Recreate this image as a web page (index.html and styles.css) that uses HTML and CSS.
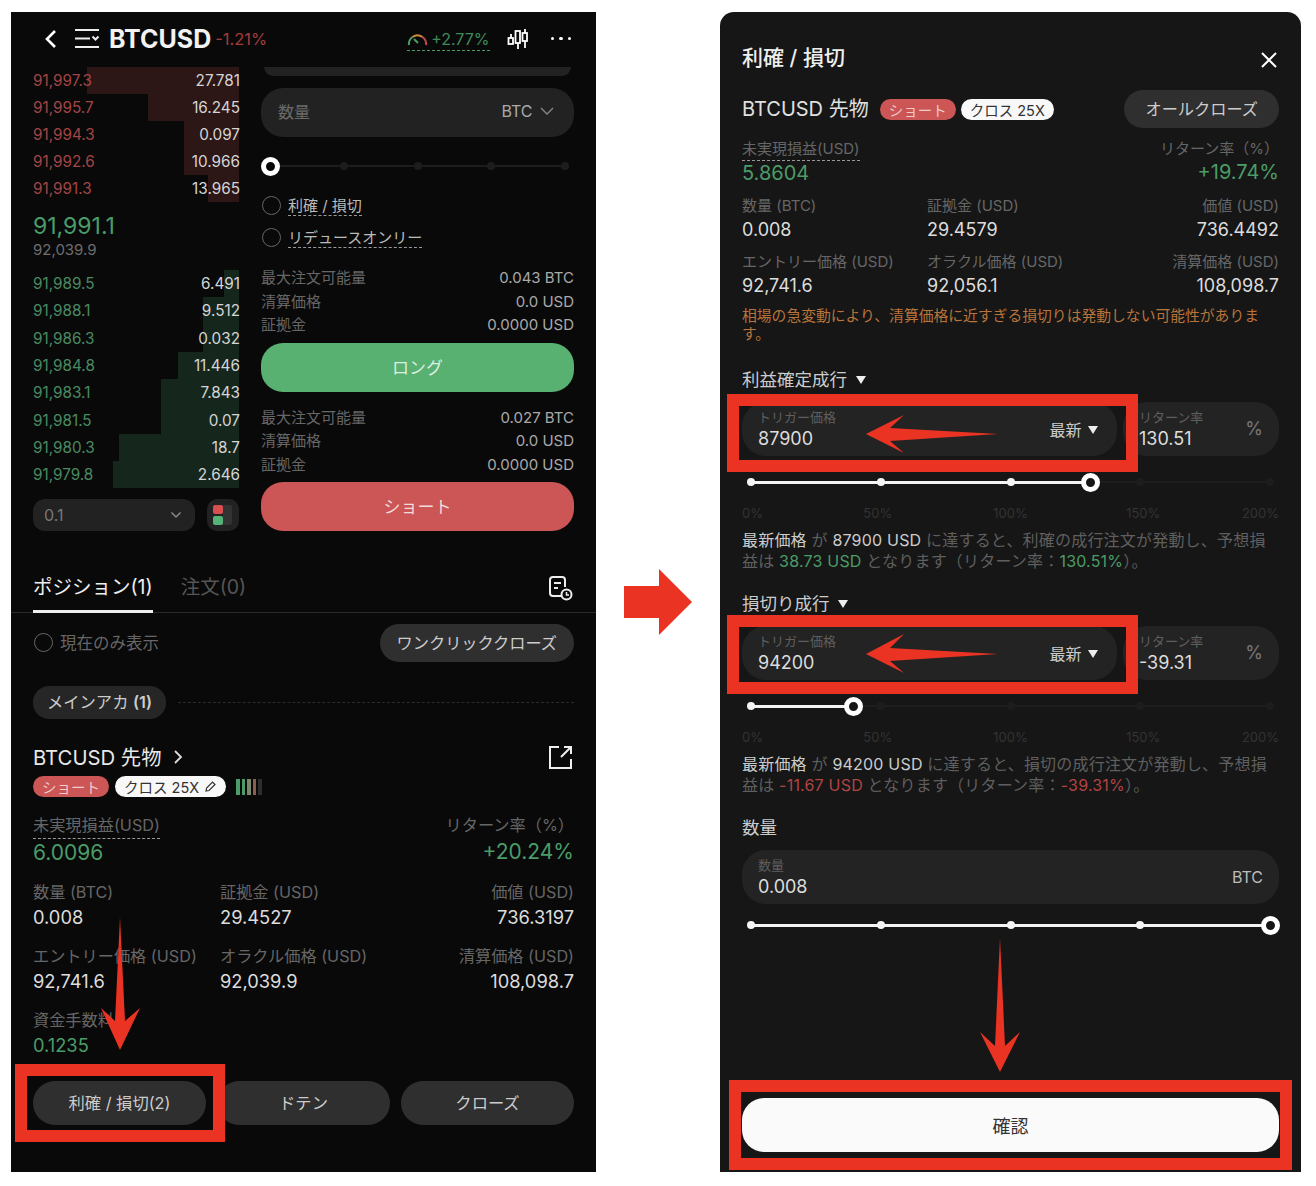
FILE: index.html
```html
<!DOCTYPE html>
<html lang="ja">
<head>
    <meta charset="UTF-8">
    <meta name="viewport" content="width=device-width, initial-scale=1.0">
    <title>BTCUSD 利確 / 損切</title>
    <link rel="stylesheet" href="styles.css">
</head>
<body>
<div class="page">
    <div class="phone trade">
        <header class="topbar">
            <svg class="ico-back" width="13" height="20" viewBox="0 0 13 20"><path d="M11 2 3 10l8 8" fill="none" stroke="#fff" stroke-width="2.6"/></svg>
            <svg class="ico-menu" width="26" height="21" viewBox="0 0 26 21"><path d="M1 2h24M1 10.5h15M1 19h24" stroke="#eee" stroke-width="2.2" fill="none"/><path d="M18.5 8.5l3 3 3-3" stroke="#eee" stroke-width="2" fill="none"/></svg>
            <span class="symbol">BTCUSD</span>
            <span class="change">-1.21%</span>
            <span class="funding">
                <svg width="21" height="14" viewBox="0 0 21 14"><path d="M2 13A8.500 8.500 0 0 1 5.500 5" fill="none" stroke="#4d9a66" stroke-width="2"/><path d="M5.500 5A8.500 8.500 0 0 1 15.500 5" fill="none" stroke="#d08a3a" stroke-width="2"/><path d="M15.500 5A8.500 8.500 0 0 1 19 13" fill="none" stroke="#c24a4a" stroke-width="2"/><path d="M7 7l4 4" stroke="#4d9a66" stroke-width="2"/></svg>
                <span class="funding-val">+2.77%</span>
            </span>
            <svg class="ico-candle" width="22" height="22" viewBox="0 0 22 22"><g fill="none" stroke="#fff" stroke-width="1.8"><rect x="1.500" y="10" width="4.500" height="6"/><path d="M4 6v4"/><rect x="8.500" y="3" width="4.500" height="12"/><path d="M11 15v6"/><rect x="15.500" y="5" width="4.500" height="8"/><path d="M18 1v4M18 13v7"/></g></svg>
            <span class="more"><i></i><i></i><i></i></span>
        </header>

        <div class="market">
            <div class="book">
                <div class="book-row ask"><span class="bar" style="width:152px"></span><span class="px">91,997.3</span><span class="sz">27.781</span></div>
                <div class="book-row ask"><span class="bar" style="width:91px"></span><span class="px">91,995.7</span><span class="sz">16.245</span></div>
                <div class="book-row ask"><span class="bar" style="width:55px"></span><span class="px">91,994.3</span><span class="sz">0.097</span></div>
                <div class="book-row ask"><span class="bar" style="width:55px"></span><span class="px">91,992.6</span><span class="sz">10.966</span></div>
                <div class="book-row ask"><span class="bar" style="width:31px"></span><span class="px">91,991.3</span><span class="sz">13.965</span></div>
                <div class="last-price">91,991.1</div>
                <div class="oracle-price">92,039.9</div>
                <div class="book-row bid"><span class="bar" style="width:15px"></span><span class="px">91,989.5</span><span class="sz">6.491</span></div>
                <div class="book-row bid"><span class="bar" style="width:36px"></span><span class="px">91,988.1</span><span class="sz">9.512</span></div>
                <div class="book-row bid"><span class="bar" style="width:36px"></span><span class="px">91,986.3</span><span class="sz">0.032</span></div>
                <div class="book-row bid"><span class="bar" style="width:61px"></span><span class="px">91,984.8</span><span class="sz">11.446</span></div>
                <div class="book-row bid"><span class="bar" style="width:78px"></span><span class="px">91,983.1</span><span class="sz">7.843</span></div>
                <div class="book-row bid"><span class="bar" style="width:78px"></span><span class="px">91,981.5</span><span class="sz">0.07</span></div>
                <div class="book-row bid"><span class="bar" style="width:120px"></span><span class="px">91,980.3</span><span class="sz">18.7</span></div>
                <div class="book-row bid"><span class="bar" style="width:126px"></span><span class="px">91,979.8</span><span class="sz">2.646</span></div>
                <div class="book-foot">
                    <div class="tick-select">
                        <span>0.1</span>
                        <svg width="12" height="8" viewBox="0 0 12 8"><path d="M1.500 1.500 6 6l4.500-4.500" fill="none" stroke="#888" stroke-width="1.500"/></svg>
                    </div>
                    <div class="view-toggle">
                        <span class="toggle-col"><i class="sq-red"></i><i class="sq-green"></i></span>
                        <span class="toggle-side"></span>
                    </div>
                </div>
            </div>

            <div class="order-form">
                <div class="input-stub"></div>
                <div class="qty-input">
                    <span class="qty-label">数量</span>
                    <span class="qty-unit">BTC
                        <svg width="14" height="8" viewBox="0 0 14 8"><path d="M1 1l6 6 6-6" fill="none" stroke="#888" stroke-width="1.300"/></svg>
                    </span>
                </div>
                <div class="slider form-slider">
                    <span class="dot"></span><span class="dot"></span><span class="dot"></span><span class="dot"></span><span class="dot"></span>
                    <span class="knob" style="left:9px"></span>
                </div>
                <label class="check first"><span class="radio"></span><span class="dash">利確 / 損切</span></label>
                <label class="check"><span class="radio"></span><span class="dash">リデュースオンリー</span></label>
                <dl class="info">
                    <div><dt>最大注文可能量</dt><dd>0.043 BTC</dd></div>
                    <div><dt>清算価格</dt><dd>0.0 USD</dd></div>
                    <div><dt>証拠金</dt><dd>0.0000 USD</dd></div>
                </dl>
                <button class="trade-btn long">ロング</button>
                <dl class="info second">
                    <div><dt>最大注文可能量</dt><dd>0.027 BTC</dd></div>
                    <div><dt>清算価格</dt><dd>0.0 USD</dd></div>
                    <div><dt>証拠金</dt><dd>0.0000 USD</dd></div>
                </dl>
                <button class="trade-btn short">ショート</button>
            </div>
        </div>

        <nav class="tabs">
            <span class="tab active">ポジション(1)</span>
            <span class="tab">注文(0)</span>
            <svg class="ico-history" width="25" height="25" viewBox="0 0 25 25"><path d="M13 20H5a3 3 0 0 1-3-3V4a3 3 0 0 1 3-3h9a3 3 0 0 1 3 3v7" fill="none" stroke="#eee" stroke-width="2"/><path d="M6 7h7M6 12h4" stroke="#eee" stroke-width="2"/><circle cx="18.500" cy="18.500" r="5" fill="none" stroke="#eee" stroke-width="2"/><path d="M18.500 16v3h2.500" fill="none" stroke="#eee" stroke-width="1.500"/></svg>
        </nav>

        <div class="positions">
            <div class="filter-row">
                <label class="only-current"><span class="radio"></span>現在のみ表示</label>
                <button class="pill-btn">ワンクリッククローズ</button>
            </div>
            <div class="account-row">
                <span class="account-pill">メインアカ <b>(1)</b></span>
                <span class="account-line"></span>
            </div>
            <div class="pos-title">
                <span class="pos-name">BTCUSD 先物</span>
                <svg width="10" height="16" viewBox="0 0 10 16"><path d="M2 2l6 6-6 6" fill="none" stroke="#ddd" stroke-width="1.800"/></svg>
                <svg class="ico-share" width="25" height="25" viewBox="0 0 25 25"><path d="M11 2H2v21h21v-9" fill="none" stroke="#eee" stroke-width="2"/><path d="M13 12 23 2M16 2h7v7" fill="none" stroke="#eee" stroke-width="2"/></svg>
            </div>
            <div class="tags">
                <span class="tag red">ショート</span>
                <span class="tag white">クロス 25X
                    <svg width="13" height="13" viewBox="0 0 13 13"><path d="M2 11l.6-3L8.500 2l2.500 2.500-6 6z" fill="none" stroke="#333" stroke-width="1.200"/></svg>
                </span>
                <span class="risk"><i class="g"></i><i class="g"></i><i class="m"></i><i class="b"></i><i class="d"></i></span>
            </div>
            <div class="pnl">
                <div><span class="dash stat-label">未実現損益(USD)</span><div class="pnl-val green">6.0096</div></div>
                <div class="right"><span class="stat-label roe-label">リターン率（%）</span><div class="pnl-val green">+20.24%</div></div>
            </div>
            <div class="stats">
                <div><div class="stat-label">数量 (BTC)</div><div class="stat-val">0.008</div></div>
                <div><div class="stat-label">証拠金 (USD)</div><div class="stat-val">29.4527</div></div>
                <div class="right"><div class="stat-label">価値 (USD)</div><div class="stat-val">736.3197</div></div>
                <div><div class="stat-label">エントリー価格 (USD)</div><div class="stat-val">92,741.6</div></div>
                <div><div class="stat-label">オラクル価格 (USD)</div><div class="stat-val">92,039.9</div></div>
                <div class="right"><div class="stat-label">清算価格 (USD)</div><div class="stat-val">108,098.7</div></div>
                <div><div class="stat-label">資金手数料</div><div class="stat-val green">0.1235</div></div>
            </div>
            <div class="pos-actions">
                <button>利確 / 損切(2)</button>
                <button>ドテン</button>
                <button>クローズ</button>
            </div>
        </div>
    </div>

    <div class="sheet-wrap">
    <div class="phone sheet">
        <div class="sheet-head">
            <h2>利確 / 損切</h2>
            <svg width="18" height="18" viewBox="0 0 18 18"><path d="M2 2l14 14M16 2 2 16" stroke="#fff" stroke-width="2"/></svg>
        </div>
        <div class="sheet-pos">
            <span class="sheet-name">BTCUSD 先物</span>
            <span class="tag red">ショート</span>
            <span class="tag white">クロス 25X</span>
            <button class="pill-btn close-all">オールクローズ</button>
        </div>
        <div class="pnl">
            <div><span class="dash stat-label">未実現損益(USD)</span><div class="pnl-val green">5.8604</div></div>
            <div class="right"><span class="stat-label roe-label">リターン率（%）</span><div class="pnl-val green">+19.74%</div></div>
        </div>
        <div class="stats">
            <div><div class="stat-label">数量 (BTC)</div><div class="stat-val">0.008</div></div>
            <div><div class="stat-label">証拠金 (USD)</div><div class="stat-val">29.4579</div></div>
            <div class="right"><div class="stat-label">価値 (USD)</div><div class="stat-val">736.4492</div></div>
            <div><div class="stat-label">エントリー価格 (USD)</div><div class="stat-val">92,741.6</div></div>
            <div><div class="stat-label">オラクル価格 (USD)</div><div class="stat-val">92,056.1</div></div>
            <div class="right"><div class="stat-label">清算価格 (USD)</div><div class="stat-val">108,098.7</div></div>
        </div>
        <p class="warning">相場の急変動により、清算価格に近すぎる損切りは発動しない可能性がありま<br>す。</p>

        <div class="sec-title first">利益確定成行 <span class="tri"></span></div>
        <div class="tp-inputs">
            <div class="field trigger">
                <div><div class="field-label">トリガー価格</div><div class="field-val">87900</div></div>
                <span class="field-type">最新 <span class="tri"></span></span>
            </div>
            <div class="field roe">
                <div><div class="field-label">リターン率</div><div class="field-val">130.51</div></div>
                <span class="field-pct">%</span>
            </div>
        </div>
        <div class="slider range" >
            <span class="fill" style="width:347px"></span>
            <span class="dot on"></span><span class="dot on"></span><span class="dot on"></span><span class="dot"></span><span class="dot"></span>
            <span class="knob" style="left:348px"></span>
        </div>
        <div class="ticks"><span>0%</span><span>50%</span><span>100%</span><span>150%</span><span>200%</span></div>
        <p class="desc"><b>最新価格</b> が <b>87900 USD</b> に達すると、利確の成行注文が発動し、予想損<br>益は <em class="green">38.73 USD</em> となります（リターン率：<em class="green">130.51%</em>）。</p>

        <div class="sec-title">損切り成行 <span class="tri"></span></div>
        <div class="tp-inputs">
            <div class="field trigger">
                <div><div class="field-label">トリガー価格</div><div class="field-val">94200</div></div>
                <span class="field-type">最新 <span class="tri"></span></span>
            </div>
            <div class="field roe">
                <div><div class="field-label">リターン率</div><div class="field-val">-39.31</div></div>
                <span class="field-pct">%</span>
            </div>
        </div>
        <div class="slider range">
            <span class="fill" style="width:111px"></span>
            <span class="dot on"></span><span class="dot"></span><span class="dot"></span><span class="dot"></span><span class="dot"></span>
            <span class="knob" style="left:111px"></span>
        </div>
        <div class="ticks"><span>0%</span><span>50%</span><span>100%</span><span>150%</span><span>200%</span></div>
        <p class="desc"><b>最新価格</b> が <b>94200 USD</b> に達すると、損切の成行注文が発動し、予想損<br>益は <em class="red-text">-11.67 USD</em> となります（リターン率：<em class="red-text">-39.31%</em>）。</p>

        <div class="sec-title">数量</div>
        <div class="field amount">
            <div><div class="field-label">数量</div><div class="field-val">0.008</div></div>
            <span class="field-unit">BTC</span>
        </div>
        <div class="slider range last">
            <span class="fill" style="width:519px"></span>
            <span class="dot on"></span><span class="dot on"></span><span class="dot on"></span><span class="dot on"></span><span class="dot on"></span>
            <span class="knob" style="left:528px"></span>
        </div>
        <button class="confirm">確認</button>
    </div>
    </div>

    <!-- red annotations drawn over the two screenshots -->
    <svg class="marks" width="1316" height="1186" viewBox="0 0 1316 1186">
        <g fill="none" stroke="#ea3323" stroke-width="12">
            <rect x="21" y="1070" width="198" height="66"/>
            <rect x="733" y="400" width="399" height="66"/>
            <rect x="733" y="621" width="399" height="67"/>
            <rect x="735" y="1086" width="551" height="78"/>
        </g>
        <g fill="#ea3323">
            <polygon points="624,586 659,586 659,569 692,602 659,635 659,618 624,618"/>
            <polygon points="120,917 125,1021 140,1008 120,1050 101,1008 115,1021"/>
            <polygon points="1000,938 1005,1046 1020,1032 1000,1072 980,1032 995,1046"/>
            <polygon points="866,434 904,415 890,428 998,434 890,441 904,453"/>
            <polygon points="866,654 904,634 890,648 998,654 890,661 904,673"/>
        </g>
    </svg>
</div>
</body>
</html>
```

FILE: styles.css
```css
* {
    box-sizing: border-box;
}
body {
    margin: 0;
    background-color: #fff;
    font-family: Inter, "Noto Sans CJK JP", sans-serif;
    color: #ddd;
}
button {
    font-family: inherit;
    border: none;
}
p, h2, dl, dd {
    margin: 0;
}
em {
    font-style: normal;
}
.page {
    position: relative;
    width: 1316px;
    height: 1186px;
    display: flex;
    padding: 12px 0 0 11px;
}
.phone {
    height: 1160px;
}
.green {
    color: #4b9c68;
}
.red-text {
    color: #b04444;
}
.right {
    text-align: right;
}
.dash {
    border-bottom: 1.5px dashed #999;
}

/* left screenshot */
.trade {
    width: 585px;
    background-color: #090909;
}
.topbar {
    height: 55px;
    display: flex;
    align-items: center;
    padding: 0 25px 2px 33px;
}
.ico-back {
    margin-right: 17px;
}
.ico-menu {
    margin-right: 9px;
}
.symbol {
    font-size: 25px;
    font-weight: 700;
    color: #f2f2f2;
}
.change {
    font-size: 16.5px;
    color: #a33d3d;
    margin-left: 4px;
}
.funding {
    margin-left: auto;
    display: flex;
    align-items: center;
    gap: 3px;
    height: 22px;
    margin-top: 2px;
    border-bottom: 1.5px dashed #4d9a66;
}
.funding-val {
    font-size: 16px;
    color: #3f8a5b;
}
.ico-candle {
    margin-left: 17px;
}
.more {
    margin-left: 22px;
    display: flex;
    gap: 5px;
}
.more i {
    width: 3.5px;
    height: 3.5px;
    border-radius: 50%;
    background-color: #fff;
}

.market {
    display: flex;
    gap: 21px;
    padding: 0 22px;
    height: 464px;
}
.book {
    width: 207px;
    flex: none;
}
.book-row {
    position: relative;
    height: 27px;
    display: flex;
    justify-content: space-between;
    align-items: center;
    font-size: 15.3px;
}
.book-row.bid {
    height: 27.3px;
}
.book-row .bar {
    position: absolute;
    right: 1px;
    top: 0;
    bottom: 0;
}
.ask .bar {
    background-color: #2c1616;
}
.bid .bar {
    background-color: #15271d;
}
.ask .px {
    color: #a34545;
    position: relative;
}
.bid .px {
    color: #4a8a61;
    position: relative;
}
.sz {
    position: relative;
    color: #d5d5d5;
}
.last-price {
    margin-top: 10px;
    font-size: 23px;
    line-height: 28px;
    color: #4b9c68;
}
.oracle-price {
    font-size: 15px;
    line-height: 20px;
    color: #6e6e6e;
    margin-bottom: 10px;
}
.book-foot {
    display: flex;
    gap: 12px;
    margin-top: 11px;
}
.tick-select {
    width: 162px;
    height: 32px;
    background-color: #222;
    border-radius: 12px;
    padding: 0 13px 0 11px;
    display: flex;
    align-items: center;
    justify-content: space-between;
    font-size: 16px;
    color: #777;
}
.view-toggle {
    width: 32px;
    height: 32px;
    background-color: #222;
    border-radius: 10px;
    display: flex;
    align-items: center;
    padding-left: 6px;
}
.toggle-col {
    display: flex;
    flex-direction: column;
    gap: 2px;
}
.toggle-col i {
    width: 10px;
    height: 9px;
    border-radius: 2px;
}
.sq-red {
    background-color: #d94f4f;
}
.sq-green {
    background-color: #55b377;
}
.toggle-side {
    width: 9px;
    height: 20px;
    background-color: #333;
    border-radius: 0 2px 2px 0;
}

.order-form {
    width: 313px;
    flex: none;
}
.input-stub {
    height: 9px;
    margin: 0 3px;
    background-color: #222;
    border-radius: 0 0 14px 14px;
}
.qty-input {
    height: 49px;
    margin-top: 12px;
    background-color: #222;
    border-radius: 22px;
    display: flex;
    align-items: center;
    justify-content: space-between;
    padding: 0 20px 3px 17px;
    font-size: 16px;
}
.qty-label {
    color: #6b6b6b;
}
.qty-unit {
    color: #aaa;
    font-size: 16px;
}
.qty-unit svg {
    margin-left: 3px;
    vertical-align: 2px;
}

.slider {
    position: relative;
    display: flex;
    align-items: center;
    justify-content: space-between;
    height: 20px;
    padding: 0 5px;
}
.slider::before {
    content: "";
    position: absolute;
    left: 9px;
    right: 9px;
    top: 9px;
    height: 2px;
    background-color: #1d1d1d;
}
.slider .dot {
    position: relative;
    width: 8px;
    height: 8px;
    border-radius: 50%;
    background-color: #1d1d1d;
}
.slider .dot.on {
    background-color: #f4f4f4;
}
.slider .fill {
    position: absolute;
    left: 9px;
    top: 9px;
    height: 2.5px;
    background-color: #f4f4f4;
}
.knob {
    position: absolute;
    top: 1px;
    width: 19px;
    height: 19px;
    margin-left: -9.5px;
    border: 5px solid #fff;
    border-radius: 50%;
    background-color: #161616;
}
.form-slider {
    margin-top: 19px;
}
.form-slider .knob {
    background-color: #090909;
}
.check {
    display: flex;
    align-items: center;
    gap: 7px;
    height: 24px;
    margin-top: 8px;
    font-size: 15px;
    color: #bbb;
}
.check.first {
    margin-top: 17px;
}
.radio {
    width: 19px;
    height: 19px;
    margin-left: 1px;
    flex: none;
    border: 1.5px solid #666;
    border-radius: 50%;
}
.info {
    margin-top: 17px;
    font-size: 15px;
}
.info.second {
    margin-top: 14px;
}
.info div {
    display: flex;
    justify-content: space-between;
    line-height: 23.5px;
}
.info dt {
    color: #666;
}
.info dd {
    color: #aaa;
}
.trade-btn {
    display: block;
    width: 100%;
    height: 49px;
    margin-top: 6px;
    padding-bottom: 3px;
    border-radius: 22px;
    font-size: 17px;
}
.trade-btn.long {
    background-color: #58b071;
    color: #dcefe2;
}
.trade-btn.short {
    background-color: #cc5555;
    color: #f1dcdc;
}

.tabs {
    height: 53px;
    margin-top: 29px;
    display: flex;
    gap: 28px;
    align-items: stretch;
    padding: 0 22px;
    border-bottom: 1px solid #2a2a2a;
    position: relative;
}
.tab {
    font-size: 19.5px;
    line-height: 26px;
    padding-top: 14px;
    color: #555;
}
.tab.active {
    color: #eee;
    border-bottom: 3px solid #eee;
    margin-bottom: -1px;
}
.ico-history {
    margin-left: auto;
    margin-top: 16px;
    margin-right: 1px;
}

.positions {
    padding: 11px 22px 0;
}
.filter-row {
    display: flex;
    justify-content: space-between;
    align-items: center;
}
.only-current {
    display: flex;
    align-items: center;
    gap: 7px;
    font-size: 16.5px;
    color: #666;
    margin-bottom: 2px;
}
.pill-btn {
    height: 38px;
    padding: 0 17px 2px;
    border-radius: 19px;
    background-color: #2f2f2f;
    color: #ccc;
    font-size: 16.2px;
}
.account-row {
    display: flex;
    align-items: center;
    gap: 12px;
    margin-top: 24px;
}
.account-pill {
    height: 33px;
    line-height: 33px;
    padding: 0 14px;
    background-color: #262626;
    border-radius: 16px;
    font-size: 16.3px;
    color: #ccc;
}
.account-pill b {
    font-weight: 600;
}
.account-line {
    flex: 1;
    border-top: 1.5px dashed #2b2b2b;
}
.pos-title {
    display: flex;
    align-items: center;
    gap: 12px;
    height: 28px;
    margin-top: 24px;
}
.pos-name {
    font-size: 20.3px;
    color: #e8e8e8;
    margin-bottom: 2px;
}
.ico-share {
    margin-left: auto;
    margin-right: 1px;
}
.tags {
    display: flex;
    align-items: center;
    gap: 6px;
    margin-top: 5px;
}
.tag {
    display: inline-flex;
    align-items: center;
    gap: 5px;
    height: 21px;
    padding: 0 9px;
    border-radius: 11px;
    font-size: 14.5px;
    white-space: nowrap;
}
.tag.red {
    background-color: #cc5555;
    color: #eecccc;
}
.tag.white {
    background-color: #f8f8f8;
    color: #333;
}
.risk {
    display: flex;
    gap: 2px;
    margin-left: 4px;
}
.risk i {
    width: 3.5px;
    height: 16px;
}
.risk .g {
    background-color: #4b9c68;
}
.risk .m {
    background-color: #7b8a6c;
}
.risk .b {
    background-color: #8a5f4d;
}
.risk .d {
    background-color: #2e2e2e;
}
.pnl {
    display: flex;
    justify-content: space-between;
    margin-top: 17px;
}
.stat-label {
    color: #666;
    font-size: 16.2px;
    line-height: 22px;
    padding-bottom: 2px;
    display: inline-block;
}
.pnl-val {
    font-size: 21px;
    line-height: 28px;
}
.stats {
    display: grid;
    grid-template-columns: 187px 1fr auto;
    row-gap: 15px;
    margin-top: 14px;
}
.stat-val {
    font-size: 18.3px;
    line-height: 26px;
    margin-top: -1px;
    color: #ddd;
}
.stat-val.green {
    color: #4b9c68;
}
.pos-actions {
    display: grid;
    grid-template-columns: repeat(3, 1fr);
    gap: 11px;
    margin-top: 23px;
}
.pos-actions button {
    height: 44px;
    padding-bottom: 4px;
    border-radius: 22px;
    background-color: #2f2f2f;
    color: #ccc;
    font-size: 16.3px;
}

/* right screenshot */
.sheet-wrap {
    margin-left: 124px;
}
.sheet {
    width: 581px;
    background-color: #161616;
    border-radius: 14px 14px 0 0;
    padding: 30px 22px 0;
    display: flex;
    flex-direction: column;
}
.sheet-head {
    display: flex;
    justify-content: space-between;
    align-items: center;
    height: 32px;
}
.sheet-head svg {
    margin: 4px 1px 0 0;
}
.sheet-head h2 {
    font-size: 21px;
    font-weight: 500;
    color: #eee;
    margin-bottom: 4px;
}
.sheet-pos {
    display: flex;
    align-items: center;
    gap: 5px;
    margin-top: 16px;
}
.sheet-name {
    font-size: 20px;
    color: #e0e0e0;
    margin-right: 6px;
    margin-bottom: 3px;
}
.close-all {
    margin-left: auto;
    height: 38px;
    padding: 0 21px 2px;
}
.sheet .pnl {
    margin-top: 10px;
}
.sheet .stat-label {
    font-size: 15px;
    padding-bottom: 0;
}
.sheet .pnl-val {
    font-size: 20px;
    line-height: 25px;
}
.sheet .stat-val {
    font-size: 18px;
    margin-top: 0;
}
.sheet .stats {
    grid-template-columns: 185px 1fr auto;
    row-gap: 8px;
    margin-top: 9px;
}
.warning {
    margin-top: 8px;
    font-size: 14.8px;
    line-height: 18px;
    color: #b8743a;
}
.sec-title {
    margin-top: 21px;
    font-size: 17.5px;
    line-height: 24px;
    color: #ccc;
}
.sec-title.first {
    margin-top: 25px;
}
.tri {
    display: inline-block;
    width: 0;
    height: 0;
    margin-left: 4px;
    vertical-align: 2px;
    border-left: 5px solid transparent;
    border-right: 5px solid transparent;
    border-top: 8px solid #eee;
}
.tp-inputs {
    display: flex;
    gap: 6px;
    margin-top: 10px;
}
.field {
    height: 54px;
    border-radius: 24px;
    background-color: #232323;
    display: flex;
    align-items: center;
    justify-content: space-between;
    padding: 2px 19px 0 16px;
}
.field.trigger {
    flex: 1;
}
.field.roe {
    width: 156px;
    flex: none;
    padding-right: 16px;
}
.field-label {
    font-size: 13px;
    line-height: 15px;
    color: #5f5f5f;
}
.field-val {
    font-size: 18px;
    line-height: 24px;
    margin-top: 2px;
    color: #ddd;
}
.field-type, .field-pct, .field-unit {
    margin-top: -3px;
}
.field-type {
    font-size: 16px;
    color: #ccc;
}
.field-type .tri {
    margin-left: 2px;
}
.field-pct {
    font-size: 18px;
    color: #777;
}
.field-unit {
    font-size: 16px;
    color: #bbb;
}
.field.amount {
    margin-top: 10px;
    padding-right: 16px;
}
.range {
    margin-top: 16px;
}
.range.last {
    margin-top: 11px;
}
.ticks {
    display: flex;
    justify-content: space-between;
    margin-top: 12px;
    font-size: 13px;
    line-height: 18px;
    color: #333;
}
.ticks span {
    width: 70px;
    text-align: center;
}
.ticks span:first-child {
    width: 38px;
    text-align: left;
}
.ticks span:last-child {
    width: 38px;
    text-align: right;
}
.desc {
    margin-top: 8px;
    font-size: 16px;
    line-height: 20.5px;
    letter-spacing: 0.2px;
    color: #5f5f5f;
    white-space: nowrap;
}
.desc b {
    font-weight: 400;
    color: #ccc;
}
.confirm {
    margin-top: auto;
    margin-bottom: 20px;
    height: 54px;
    border-radius: 22px;
    background-color: #fafafa;
    color: #333;
    font-size: 18px;
}

/* annotation layer */
.marks {
    position: absolute;
    left: 0;
    top: 0;
    pointer-events: none;
}
```
